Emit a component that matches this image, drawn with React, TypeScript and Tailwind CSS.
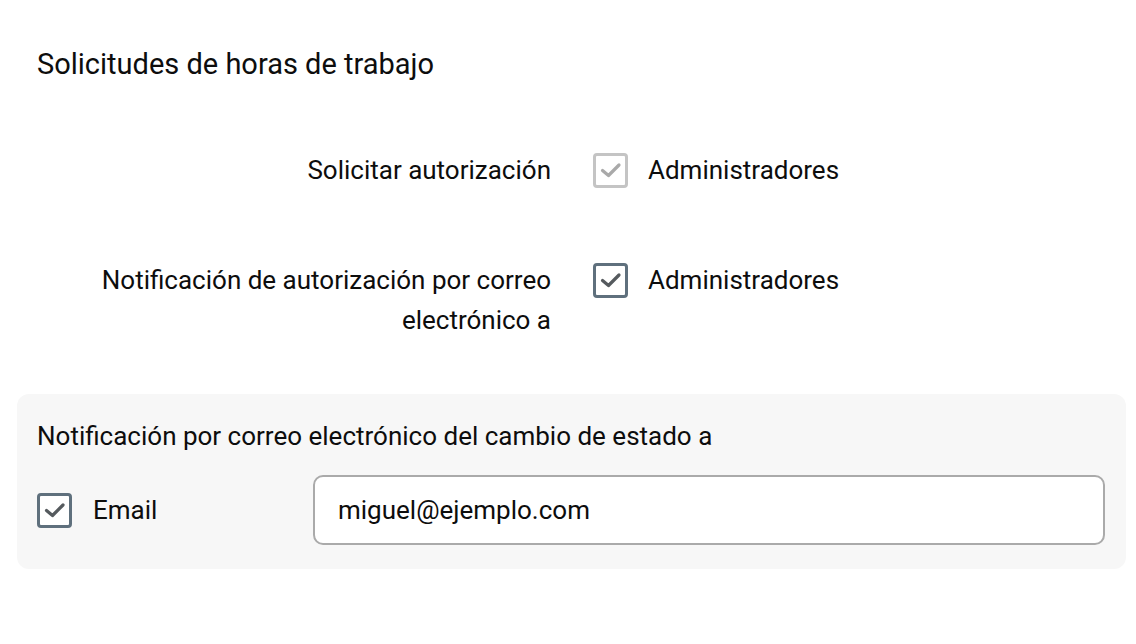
import React from "react";

function Check({ disabled }: { disabled?: boolean }) {
  return (
    <div
      className={
        "w-[35px] h-[35px] shrink-0 rounded-[4px] border-[3px] flex items-center justify-center bg-white " +
        (disabled ? "border-[#c4c4c4]" : "border-[#5f707d]")
      }
    >
      <svg width="26" height="26" viewBox="0 0 26 26" fill="none">
        <path
          d="M4.5 13.5 L10.5 18.5 L21 8"
          stroke={disabled ? "#a9a9a9" : "#555a5e"}
          strokeWidth="3.2"
          strokeLinecap="round"
          strokeLinejoin="round"
        />
      </svg>
    </div>
  );
}

export default function App() {
  return (
    <div className="w-[1136px] h-[644px] bg-white text-[#0d0d0d] font-['Roboto',sans-serif] text-[26px] leading-[40px]">
      <div className="pt-[46px] pl-[37px] text-[29px] leading-[36px]">Solicitudes de horas de trabajo</div>
      <div className="mt-[68px] grid grid-cols-[514px_1fr] gap-x-[42px] pl-[37px]">
        <div className="text-right">Solicitar autorización</div>
        <div className="flex items-center gap-[20px]">
          <Check disabled />
          <span>Administradores</span>
        </div>
        <div className="text-right mt-[70px]">
          Notificación de autorización por correo
          <br />
          electrónico a
        </div>
        <div className="flex items-start gap-[20px] mt-[70px]">
          <div className="h-[40px] flex items-center">
            <Check />
          </div>
          <span>Administradores</span>
        </div>
      </div>
      <div className="mt-[54px] mx-[17px] w-[1109px] rounded-[12px] bg-[#f7f7f7] pt-[22px] pb-[24px] pl-[20px] pr-[21px]">
        <div>Notificación por correo electrónico del cambio de estado a</div>
        <div className="mt-[19px] flex items-center">
          <div className="w-[276px] flex items-center gap-[21px]">
            <Check />
            <span>Email</span>
          </div>
          <div className="flex-1 h-[70px] rounded-[10px] border-2 border-[#aaaaaa] bg-white flex items-center pl-[23px]">
            miguel@ejemplo.com
          </div>
        </div>
      </div>
    </div>
  );
}
